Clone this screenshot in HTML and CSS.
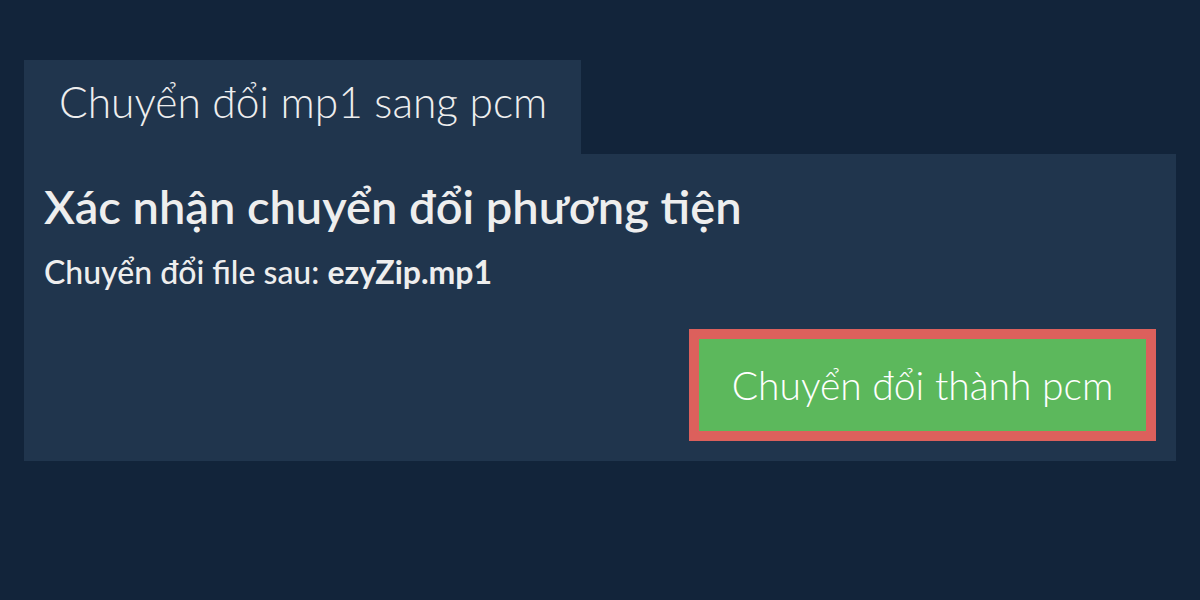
FILE: index.html
```html
<!DOCTYPE html>
<html lang="vi">
<head>
<meta charset="utf-8">
<link rel="stylesheet" href="styles.css">
</head>
<body>
<div class="wrap">
  <div class="tab">Chuyển đổi mp1 sang pcm</div>
  <div class="panel">
    <h1 class="title">Xác nhận chuyển đổi phương tiện</h1>
    <p class="info">Chuyển đổi file sau: <b>ezyZip.mp1</b></p>
    <div class="actions">
      <button class="convert">Chuyển đổi thành pcm</button>
    </div>
  </div>
</div>
</body>
</html>
```
FILE: styles.css
```css
html, body {
  margin: 0;
  padding: 0;
  background: #12243a;
  height: 100%;
}
body {
  font-family: Lato, "Noto Sans", sans-serif;
  color: #eeeeee;
}
.wrap {
  padding: 60px 24px 0 24px;
}
.tab {
  display: inline-block;
  vertical-align: top;
  background: #20354d;
  height: 94px;
  box-sizing: border-box;
  padding: 14px 34px 0 35px;
  font-size: 42.5px;
  font-weight: 300;
  line-height: 56px;
  white-space: nowrap;
}
.panel {
  background: #20354d;
  padding: 14px 20px 20px 20px;
  height: 307px;
  box-sizing: border-box;
}
.title {
  margin: 0;
  font-size: 47px;
  font-weight: 600;
  line-height: 76px;
}
.info {
  margin: 10px 0 0 0;
  font-size: 32px;
  font-weight: 500;
  line-height: 36px;
}
.info b {
  font-weight: 700;
}
.actions {
  display: flex;
  justify-content: flex-end;
  margin-top: 39px;
}
.convert {
  background: #5cb85c;
  border: 10px solid #dc605c;
  color: #ffffff;
  font-family: Lato, "Noto Sans", sans-serif;
  font-weight: 300;
  font-size: 39px;
  width: 467px;
  height: 112px;
  padding: 0;
}
```
